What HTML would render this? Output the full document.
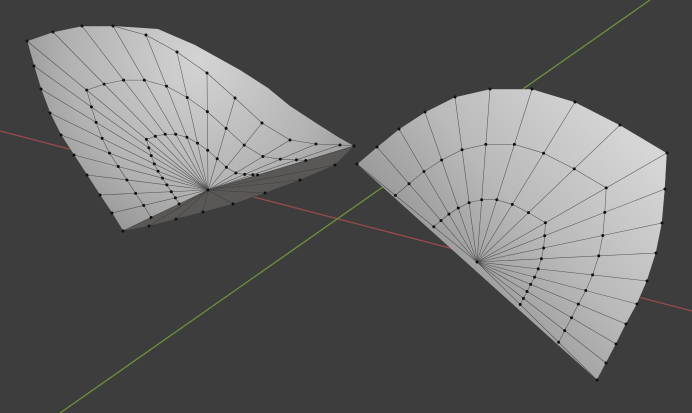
<!DOCTYPE html>
<html><head><meta charset="utf-8"><style>
html,body{margin:0;padding:0;background:#3d3d3d;overflow:hidden}
svg{display:block}
</style></head><body>
<svg id="s" width="692" height="413" viewBox="0 0 692 413" xmlns="http://www.w3.org/2000/svg">
<defs>
<linearGradient id="gR2" x1="620" y1="120" x2="420" y2="300" gradientUnits="userSpaceOnUse">
<stop offset="0" stop-color="#d6d6d6"/><stop offset="0.5" stop-color="#b9b9b9"/><stop offset="1" stop-color="#8c8c8c"/>
</linearGradient>
<radialGradient id="gL" cx="200" cy="60" r="220" gradientUnits="userSpaceOnUse">
<stop offset="0" stop-color="#d4d4d4"/><stop offset="0.6" stop-color="#b2b2b2"/><stop offset="1" stop-color="#888"/>
</radialGradient>
</defs>
<rect width="692" height="413" fill="#3d3d3d"/>
<line x1="0" y1="131" x2="692" y2="311" stroke="#9a4a4e" stroke-width="1.3"/>
<line x1="60" y1="413" x2="650" y2="0" stroke="#6f8f3a" stroke-width="1.3"/>
<polygon fill="url(#gL)" points="27,41 53,32 82,26 113,26 158,29 195,45 240,70 268,88 290,106 316,123 338,137 354,146 335,165 300,180 265,193 233,204 203,212 176,219 149,226 123,231 112,213 100,195 87,175 74,155 61,135 50,113 41,89 34,66"/>
<polygon fill="#5a5856" points="208,190 354,146 335,165 300,180 265,193 233,204 203,212 176,219 149,226 123,231 150,218 180,204"/>
<polygon fill="url(#gR2)" points="357,164 377,147 399,129 425,112 455,97 490,89 532,89 575,102 620,125 667,153 665,189 662,223 656,253 647,281 637,304 626,324 616,344 606,363 597,380"/>
<g id="m" stroke="#3a3a3a" stroke-width="0.55" fill="none" opacity="0.8"></g>
<g id="d" fill="#111"></g>
</svg>
<script>
var m=document.getElementById('m'),d=document.getElementById('d'),NS='http://www.w3.org/2000/svg';
function ln(a,b){var l=document.createElementNS(NS,'line');l.setAttribute('x1',a[0]);l.setAttribute('y1',a[1]);l.setAttribute('x2',b[0]);l.setAttribute('y2',b[1]);m.appendChild(l);}
function dot(p){var c=document.createElementNS(NS,'circle');c.setAttribute('cx',p[0]);c.setAttribute('cy',p[1]);c.setAttribute('r',1.5);d.appendChild(c);}
function fan(C,P,ts){var rings=ts.map(function(t){return P.map(function(p){return [C[0]+(p[0]-C[0])*t,C[1]+(p[1]-C[1])*t];});});
P.forEach(function(p){ln(C,p);dot(p);});
rings.forEach(function(r){for(var i=0;i<r.length;i++){dot(r[i]);if(i>0)ln(r[i-1],r[i]);}});
for(var i=1;i<P.length;i++)ln(P[i-1],P[i]);dot(C);}
fan([477,262],[[357,164],[377,147],[399,129],[425,112],[455,97],[490,89],[532,89],[575,102],[620,125],[667,153],[665,189],[662,223],[656,253],[647,281],[637,304],[626,324],[616,344],[606,363],[597,380]],[0.36,0.68]);
fan([208,190],[[123,231],[112,213],[100,195],[87,175],[74,155],[61,135],[50,113],[41,89],[34,66],[27,41],[53,32],[82,26],[113,26],[146,35],[177,52],[207,73],[235,98],[262,123],[290,140],[316,144],[340,145],[354,146]],[0.34,0.67]);
var bot=[[354,146],[335,165],[300,180],[265,193],[233,204],[203,212],[176,219],[149,226],[123,231]];
for(var i=0;i<bot.length;i++){dot(bot[i]);if(i>0)ln(bot[i-1],bot[i]);ln([208,190],bot[i]);}
</script>
</body></html>
